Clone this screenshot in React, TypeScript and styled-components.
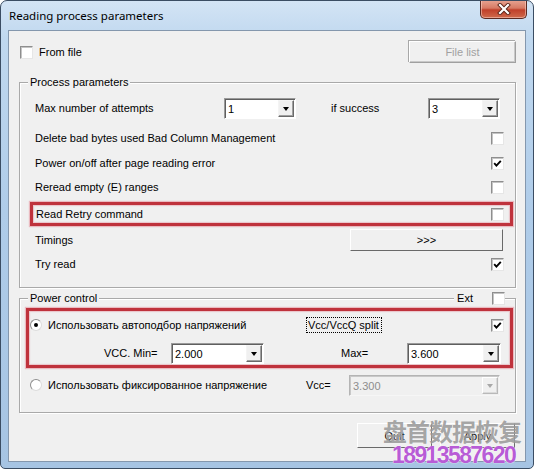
import styled, { createGlobalStyle } from 'styled-components'

const Global = createGlobalStyle`
  html, body { margin: 0; padding: 0; background: #ffffff; }
  body { font-family: "Liberation Sans", Arial, sans-serif; font-size: 11px; color: #000; }
`

const Frame = styled.div`
  position: relative;
  width: 534px;
  height: 469px;
  box-sizing: border-box;
  border: 1px solid #3b4d63;
  border-radius: 7px 7px 5px 5px;
  background: linear-gradient(180deg, #d3e4f5 0%, #c0d8ef 8%, #afcce9 45%, #a6c4e3 100%);
  padding: 0 7px 6px 7px;
  display: flex;
  flex-direction: column;
  overflow: hidden;
`

const TitleBar = styled.div`
  height: 29px;
  display: flex;
  justify-content: space-between;
  align-items: flex-start;
`

const Title = styled.div`
  padding: 7px 0 0 1px;
  font-family: "Noto Sans", "Liberation Sans", sans-serif;
  font-size: 11.5px;
  line-height: 16px;
  color: #000;
`

const CloseButton = styled.div`
  width: 47px;
  height: 19px;
  margin: -1px -1px 0 0;
  box-sizing: border-box;
  border: 1px solid #5b2a22;
  border-top: none;
  border-radius: 0 0 5px 5px;
  background: linear-gradient(180deg, #e8a593 0%, #d77a64 45%, #c0402a 55%, #cf6a4c 100%);
  box-shadow: inset 0 0 0 1px rgba(255, 220, 210, 0.5);
  display: flex;
  align-items: center;
  justify-content: center;
`

const Client = styled.div`
  flex: 1;
  box-sizing: border-box;
  background: #f0f0f0;
  border: 1px solid #8497ad;
  padding: 0 9px 0 10px;
  display: flex;
  flex-direction: column;
`

const TopRow = styled.div`
  margin-top: 10px;
  height: 22px;
  display: flex;
  align-items: center;
  justify-content: space-between;
`

const CheckLabel = styled.label`
  display: flex;
  align-items: center;
  gap: 6px;
  margin-left: 1px;
`

const Group = styled.div<{ $mt: number; $pt: number; $pb: number }>`
  position: relative;
  margin-top: ${p => p.$mt}px;
  padding: ${p => p.$pt}px 0 ${p => p.$pb}px 0;
  border: 1px solid #a9a9a9;
  box-shadow: inset 1px 1px 0 #ffffff, 1px 1px 0 #ffffff;
  display: flex;
  flex-direction: column;
`

const Legend = styled.div`
  position: absolute;
  top: -8px;
  left: 8px;
  padding: 0 2px;
  background: #f0f0f0;
  line-height: 14px;
`

const GroupExtra = styled.div`
  position: absolute;
  top: -8px;
  right: 10px;
  padding-left: 3px;
  display: flex;
  align-items: center;
  gap: 19px;
  background: #f0f0f0;
  height: 14px;
`

const Row = styled.div<{ $h?: number; $mt?: number; $pl?: number; $pr?: number }>`
  display: flex;
  align-items: center;
  height: ${p => p.$h ?? 22}px;
  margin-top: ${p => p.$mt ?? 0}px;
  padding: 0 ${p => p.$pr ?? 11}px 0 ${p => p.$pl ?? 15}px;
  box-sizing: border-box;
`

const Highlight = styled.div<{ $mt: number; $ml: number; $pl: number }>`
  margin: ${p => p.$mt}px 2px 0 ${p => p.$ml}px;
  border: 3px solid #bf323c;
  box-shadow: 0 0 1px 1px rgba(230, 150, 160, 0.6), inset 0 0 1px 1px rgba(230, 150, 160, 0.5);
  padding: 0 6px 0 ${p => p.$pl}px;
  display: flex;
  flex-direction: column;
`

const Label = styled.span<{ $w?: number }>`
  ${p => (p.$w ? `width: ${p.$w}px; flex: none;` : 'flex: 1;')}
  white-space: nowrap;
`

const FocusLabel = styled.span`
  outline: 1px dotted #000;
  outline-offset: 1px;
  padding: 0 1px 0 0;
  white-space: nowrap;
`

const Spacer = styled.div`
  flex: 1;
`

const Box = styled.span`
  width: 13px;
  height: 13px;
  box-sizing: border-box;
  flex: none;
  background: #ffffff;
  border: 1px solid;
  border-color: #8e8e8e #e6e6e6 #e6e6e6 #8e8e8e;
  box-shadow: inset 1px 1px 0 #c4c4c4;
  display: flex;
  align-items: center;
  justify-content: center;
`

const RadioCircle = styled.span`
  width: 12px;
  height: 12px;
  box-sizing: border-box;
  flex: none;
  border-radius: 50%;
  border: 1px solid #8e8e8e;
  border-right-color: #dcdcdc;
  border-bottom-color: #dcdcdc;
  background: #ffffff;
  display: flex;
  align-items: center;
  justify-content: center;
  margin-right: 6px;
`

const Dot = styled.span`
  width: 4px;
  height: 4px;
  border-radius: 50%;
  background: #000;
`

const Combo = styled.div<{ $w: number; $disabled?: boolean }>`
  width: ${p => p.$w}px;
  height: 21px;
  flex: none;
  box-sizing: border-box;
  border: 1px solid;
  border-color: ${p => (p.$disabled ? '#b4b4b4 #f6f6f6 #f6f6f6 #b4b4b4' : '#9a9a9a #ffffff #ffffff #9a9a9a')};
  box-shadow: inset 1px 1px 0 ${p => (p.$disabled ? '#c8c8c8' : '#5f5f5f')};
  background: ${p => (p.$disabled ? '#f0f0f0' : '#ffffff')};
  color: ${p => (p.$disabled ? '#8d8d8d' : '#000')};
  display: flex;
  align-items: center;
  padding: 1px 1px 1px 3px;
`

const ComboValue = styled.span`
  flex: 1;
  padding-top: 1px;
`

const ComboArrow = styled.span<{ $disabled?: boolean }>`
  width: 16px;
  height: 17px;
  box-sizing: border-box;
  background: #f0f0f0;
  border: 1px solid;
  border-color: ${p => (p.$disabled ? '#ffffff #b9b9b9 #b9b9b9 #ffffff' : '#f4f4f4 #6a6a6a #6a6a6a #f4f4f4')};
  box-shadow: inset -1px -1px 0 ${p => (p.$disabled ? '#dadada' : '#a0a0a0')};
  display: flex;
  align-items: center;
  justify-content: center;
  &::after {
    content: '';
    border-top: 4px solid ${p => (p.$disabled ? '#a8a8a8' : '#000')};
    border-left: 3.5px solid transparent;
    border-right: 3.5px solid transparent;
    margin-top: 1px;
  }
`

const Button = styled.div<{ $w: number; $h: number; $disabled?: boolean }>`
  width: ${p => p.$w}px;
  height: ${p => p.$h}px;
  flex: none;
  box-sizing: border-box;
  background: #f0f0f0;
  border: 1px solid;
  border-color: ${p => (p.$disabled ? '#ffffff #a0a0a0 #a0a0a0 #ffffff' : '#ffffff #696969 #696969 #ffffff')};
  box-shadow: inset -1px -1px 0 ${p => (p.$disabled ? '#c9c9c9' : '#a0a0a0')},
    ${p => (p.$disabled ? '-1px -1px 0 #a8a8a8' : 'none')};
  color: ${p => (p.$disabled ? '#a0a0a0' : '#000')};
  display: flex;
  align-items: center;
  justify-content: center;
`

const ButtonRow = styled.div`
  margin-top: 10px;
  display: flex;
  justify-content: flex-end;
  gap: 8px;
  padding-right: 1px;
`

const Watermark = styled.div`
  position: absolute;
  left: 382px;
  top: 416px;
  display: flex;
  flex-direction: column;
  align-items: flex-start;
  pointer-events: none;
`

const WatermarkCn = styled.span`
  font-family: "Noto Sans CJK SC", "Noto Sans", sans-serif;
  font-size: 24px;
  font-weight: 700;
  line-height: 28px;
  color: rgba(90, 90, 90, 0.55);
  letter-spacing: -1px;
  text-shadow: 0 0 1px rgba(255, 255, 255, 0.8);
`

const WatermarkPhone = styled.span`
  margin: -2px 0 0 9px;
  font-family: "Liberation Sans", Arial, sans-serif;
  font-size: 23px;
  font-weight: 700;
  line-height: 24px;
  letter-spacing: -1.6px;
  color: rgba(177, 76, 210, 0.92);
  text-shadow: 0 0 1px #fff, 0 0 1px #fff;
`

function Check({ checked }: { checked?: boolean }) {
  return (
    <Box>
      {checked && (
        <svg width="9" height="9" viewBox="0 0 9 9">
          <polyline points="1.2,4.2 3.4,6.6 7.8,1.8" fill="none" stroke="#000" strokeWidth="1.9" />
        </svg>
      )}
    </Box>
  )
}

function Radio({ checked }: { checked?: boolean }) {
  return <RadioCircle>{checked && <Dot />}</RadioCircle>
}

function ComboBox({ w, value, disabled }: { w: number; value: string; disabled?: boolean }) {
  return (
    <Combo $w={w} $disabled={disabled}>
      <ComboValue>{value}</ComboValue>
      <ComboArrow $disabled={disabled} />
    </Combo>
  )
}

export default function App() {
  return (
    <Frame>
      <Global />
      <TitleBar>
        <Title>Reading process parameters</Title>
        <CloseButton>
          <svg width="14" height="12" viewBox="0 0 14 12">
            <path d="M3 2 L11 10 M11 2 L3 10" stroke="#5a2418" strokeWidth="4" strokeLinecap="square" />
            <path d="M3 2 L11 10 M11 2 L3 10" stroke="#ffffff" strokeWidth="2.2" strokeLinecap="square" />
          </svg>
        </CloseButton>
      </TitleBar>

      <Client>
        <TopRow>
          <CheckLabel>
            <Check />
            From file
          </CheckLabel>
          <Button $w={107} $h={22} $disabled>File list</Button>
        </TopRow>

        <Group $mt={19} $pt={13} $pb={12}>
          <Legend>Process parameters</Legend>
          <Row $h={24}>
            <Label $w={189}>Max number of attempts</Label>
            <ComboBox w={72} value="1" />
            <Label $w={35} />
            <Label $w={97}>if success</Label>
            <ComboBox w={72} value="3" />
          </Row>
          <Row $mt={7}>
            <Label>Delete bad bytes used Bad Column Management</Label>
            <Check />
          </Row>
          <Row $mt={3}>
            <Label>Power on/off after page reading error</Label>
            <Check checked />
          </Row>
          <Row $mt={2}>
            <Label>Reread empty (E) ranges</Label>
            <Check />
          </Row>
          <Highlight $mt={4} $ml={10} $pl={3}>
            <Row $h={18} $pl={0} $pr={0}>
              <Label>Read Retry command</Label>
              <Check />
            </Row>
          </Highlight>
          <Row $mt={3}>
            <Label>Timings</Label>
            <Button $w={153} $h={22} style={{ marginRight: 1 }}>&gt;&gt;&gt;</Button>
          </Row>
          <Row $mt={2}>
            <Label>Try read</Label>
            <Check checked />
          </Row>
        </Group>

        <Group $mt={10} $pt={0} $pb={16}>
          <Legend>Power control</Legend>
          <GroupExtra>
            <span>Ext</span>
            <Check />
          </GroupExtra>
          <Highlight $mt={9} $ml={6} $pl={1}>
            <Row $mt={3} $pl={0} $pr={0}>
              <Radio checked />
              <Label $w={260}>Использовать автоподбор напряжений</Label>
              <FocusLabel>Vcc/VccQ split</FocusLabel>
              <Spacer />
              <Check checked />
            </Row>
            <Row $mt={6} $pl={74} $pr={4} style={{ marginBottom: 1 }}>
              <Label $w={67}>VCC. Min=</Label>
              <ComboBox w={93} value="2.000" />
              <Label $w={77} />
              <Label $w={66}>Max=</Label>
              <ComboBox w={94} value="3.600" />
            </Row>
          </Highlight>
          <Row $mt={6} $pl={10} $pr={15}>
            <Radio />
            <Label $w={258}>Использовать фиксированное напряжение</Label>
            <Label $w={43}>Vcc=</Label>
            <ComboBox w={151} value="3.300" disabled />
          </Row>
        </Group>

        <ButtonRow>
          <Button $w={75} $h={25}>Quit</Button>
          <Button $w={75} $h={25}>Apply</Button>
        </ButtonRow>
      </Client>

      <Watermark>
        <WatermarkCn>盘首数据恢复</WatermarkCn>
        <WatermarkPhone>18913587620</WatermarkPhone>
      </Watermark>
    </Frame>
  )
}
